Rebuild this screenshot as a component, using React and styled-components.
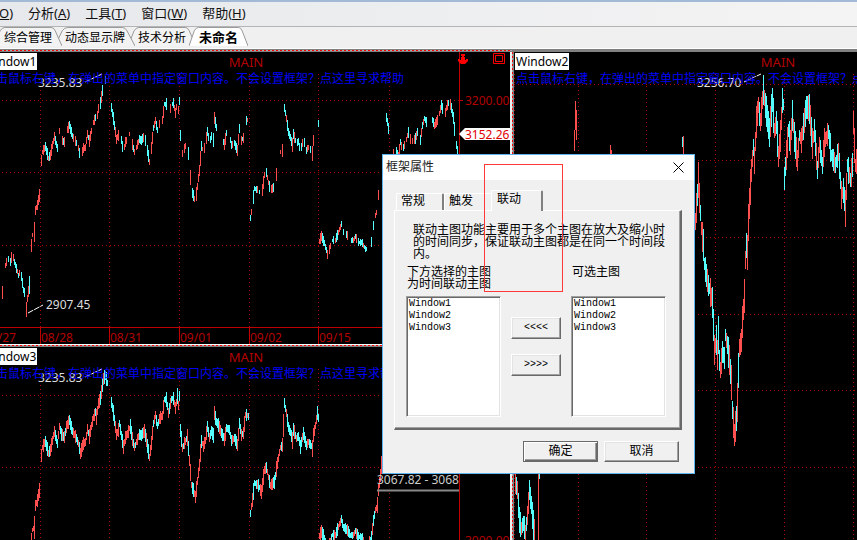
import React, { useState } from 'react';
import styled, { createGlobalStyle, css } from 'styled-components';

const UP = '#ff5050';
const DOWN = '#54ffff';
const GRID = '#b00000';

const GlobalStyle = createGlobalStyle`
    * {
        box-sizing: border-box;
    }
    body {
        margin: 0;
        overflow: hidden;
        background: #000;
        font-family: 'Noto Sans', 'Noto Sans CJK SC', sans-serif;
        font-size: 12px;
    }
    button, select {
        font: inherit;
        color: inherit;
    }
`;

const Page = styled.div`
    position: relative;
    display: flex;
    flex-direction: column;
    height: 100vh;
    overflow: hidden;
`;

const MenuBar = styled.nav`
    display: flex;
    align-items: center;
    gap: 15px;
    flex: none;
    height: 27px;
    padding-bottom: 2px;
    margin-left: -1px;
    border-top: 2px solid #a3bad6;
    border-bottom: 1px solid #b4b4b4;
    background: linear-gradient(90deg, #e6e8eb, #f4f4f4);
    font-size: 13px;
`;

const MenuItem = styled.button`
    padding: 0;
    border: 0;
    background: none;
    color: #111;
    line-height: 20px;
    white-space: nowrap;
`;

const DocTabs = styled.div`
    display: flex;
    align-items: flex-end;
    flex: none;
    height: 22px;
    padding-bottom: 2px;
    margin-left: -6px;
    background: #f0f0f0;
    border-bottom: 1px solid #fff;
`;

const DocTab = styled.button`
    position: relative;
    z-index: ${(props) => props.$order};
    height: 19px;
    padding: 2px 10px 0;
    margin-right: -7px;
    border: 0;
    background: none;
    color: #000;
    font-size: ${(props) => (props.$active ? '13px' : '12px')};
    font-weight: ${(props) => (props.$active ? 700 : 400)};
    line-height: 17px;
    white-space: nowrap;
    svg {
        position: absolute;
        inset: 0;
        width: 100%;
        height: 100%;
        z-index: -1;
    }
`;

const Workspace = styled.main`
    flex: none;
    display: grid;
    grid-template-columns: 1fr 1fr;
    grid-template-rows: 1fr 1fr;
    width: calc(100% + 207px);
    height: calc(100vh + 50px);
    margin-left: -20px;
`;

const dots = (angle) => `repeating-linear-gradient(${angle}, #f00 0 2px, #a8a8a8 2px 4px)`;

const Pane = styled.section`
    display: flex;
    grid-row: span ${(props) => props.$rows};
    min-width: 0;
    min-height: 0;
    padding: 3px 2px 0;
    background:
        ${(props) => props.$marked && css`${dots('90deg')} 0 1px / 100% 1px no-repeat,`}
        ${(props) => !props.$marked && css`${dots('0deg')} 0 3px / 1px 100% no-repeat,`}
        linear-gradient(${(props) => props.$edge}, ${(props) => props.$edge}) 0 0 / 100% 1px no-repeat,
        linear-gradient(#808080, #808080) 0 0 / 100% 3px no-repeat,
        linear-gradient(90deg, #808080 50%, #f0f0f0 50%);
`;

const ChartArea = styled.div`
    position: relative;
    flex: 1;
    overflow: hidden;
    background: #000;
`;

const Chart = styled.svg`
    position: absolute;
    inset: 0;
    width: 100%;
    height: 100%;
    font-size: 12px;
`;

const PaneHead = styled.div`
    position: relative;
    display: grid;
    grid-template-columns: 1fr auto 1fr;
    align-items: start;
    padding: 1px 1px 0;
    color: #b40000;
`;

const PaneName = styled.span`
    justify-self: start;
    padding: 0 1px;
    background: #fff;
    color: #000;
    line-height: 17px;
`;

const PaneTitle = styled.span`
    font-size: 13px;
    line-height: 18px;
`;

const PaneTools = styled.span`
    display: flex;
    justify-content: flex-end;
    gap: 25px;
    padding-right: 4px;
`;

const Hint = styled.a`
    position: relative;
    display: block;
    margin-left: 2px;
    color: #0000f4;
    font-family: 'Noto Sans CJK SC', sans-serif;
    line-height: 14px;
    text-decoration: none;
    white-space: nowrap;
`;

const Dialog = styled.form`
    position: absolute;
    z-index: 10;
    left: 382px;
    top: 154px;
    width: 313px;
    border: 1px solid #5eb4ee;
    background: #f0f0f0;
    color: #000;
    font-family: 'Liberation Mono', 'Noto Sans CJK SC', monospace;
    line-height: 12px;
`;

const TitleBar = styled.header`
    display: flex;
    justify-content: space-between;
    align-items: center;
    height: 25px;
    padding: 0 10px 0 3px;
    background: #fff;
    color: #222;
`;

const CloseButton = styled.button`
    display: flex;
    padding: 0;
    border: 0;
    background: none;
`;

const DialogBody = styled.div`
    padding: 10px 12px 11px 11px;
`;

const TabList = styled.div`
    display: flex;
    align-items: flex-end;
    height: 20px;
    padding-left: 2px;
`;

const PageTab = styled.button`
    position: relative;
    width: 48px;
    height: 17px;
    padding: 0 0 0 4px;
    border: 0;
    border-top: 1px solid #fff;
    border-left: 1px solid #fff;
    border-right: 2px solid #808080;
    border-radius: 2px 2px 0 0;
    background: #f0f0f0;
    line-height: 14px;
    text-align: left;
    &:nth-child(2) {
        border-right-color: #f0f0f0;
    }
    ${(props) =>
        props.$active &&
        css`
            width: 52px;
            height: 21px;
            padding: 0 0 3px 5px;
            margin: 0 0 -1px -1px;
        `}
`;

const TabPage = styled.div`
    height: 220px;
    padding: 14px 14px 0 11px;
    border: 1px solid #fff;
    border-right: 2px solid #696969;
    border-bottom: 2px solid #696969;
    box-shadow: inset -1px -1px #a0a0a0;
`;

const Description = styled.p`
    margin: 0 0 6px 7px;
    white-space: nowrap;
`;

const Picker = styled.div`
    display: grid;
    grid-template-columns: 95px 1fr 95px;
`;

const Field = styled.div`
    display: flex;
    flex-direction: column;
    label {
        height: 29px;
        padding-left: 1px;
        white-space: nowrap;
    }
`;

const ListBox = styled.select`
    width: 95px;
    height: 121px;
    padding: 1px;
    border: 1px solid;
    border-color: #a0a0a0 #fff #fff #a0a0a0;
    border-radius: 0;
    outline: 0;
    background: #fff;
    box-shadow: inset 1px 1px #696969, inset -1px -1px #e3e3e3;
    font-size: 10px;
    overflow: hidden;
    option {
        min-height: 12px;
        padding: 0 1px;
        line-height: 12px;
    }
`;

const Movers = styled.div`
    display: flex;
    flex-direction: column;
    align-items: center;
    gap: 15px;
    padding-top: 50px;
`;

const PushButton = styled.button`
    width: ${(props) => (props.$small ? '50px' : '75px')};
    height: ${(props) => (props.$small ? '22px' : '21px')};
    padding: 0;
    border: 1px solid;
    border-color: #fff #696969 #696969 #fff;
    background: #f0f0f0;
    box-shadow: inset -1px -1px #a0a0a0, inset 1px 1px #e3e3e3;
    font-size: ${(props) => (props.$small ? '10px' : '12px')};
    line-height: 16px;
    ${(props) =>
        props.$primary &&
        css`
            border-color: #696969;
            box-shadow: inset 1px 1px #fff, inset -1px -1px #696969, inset -2px -2px #a0a0a0;
        `}
`;

const Actions = styled.footer`
    display: flex;
    justify-content: flex-end;
    gap: 6px;
    padding: 11px 3px 0 0;
`;

const Highlight = styled.div`
    position: absolute;
    z-index: 11;
    left: 484px;
    top: 164px;
    width: 79px;
    height: 128px;
    border: 1px solid #ff3838;
    pointer-events: none;
`;

// one array per trading day, flat x, y pairs
const indexDays = [
    [0, 275, 2, 292, 5, 265, 7, 258, 10, 262, 12, 253, 14, 262, 18, 275, 20, 270, 23, 290, 25, 294,
        26, 309, 27, 298, 29, 285, 30, 260, 31, 245, 32, 235, 34, 232, 35, 210, 37, 205, 39, 195, 40, 183],
    [41, 160, 42, 152, 43, 150, 45, 146, 48, 158, 50, 155, 52, 145, 54, 136, 57, 148, 59, 131, 61, 139,
        64, 142, 66, 132, 69, 125, 72, 136, 75, 141, 78, 148, 80, 158, 83, 148, 85, 147, 87, 134, 89, 141,
        91, 131, 93, 122, 95, 117, 96, 122, 98, 108, 100, 103, 102, 90, 103, 84, 105, 80, 107, 88, 108, 88],
    [111, 107, 113, 118, 116, 139, 118, 135, 119, 128, 121, 140, 123, 152, 125, 142, 127, 139, 130, 131,
        132, 144, 134, 152, 136, 147, 139, 139, 141, 140, 144, 136, 146, 145, 149, 162, 151, 148, 153, 128,
        155, 120, 157, 130, 159, 124, 162, 120, 164, 104, 166, 104, 168, 118, 171, 104, 173, 103, 175, 113,
        177, 101, 178, 110, 179, 101, 180, 100],
    [180, 135, 182, 153, 184, 148, 187, 142, 189, 165, 191, 190, 193, 195, 195, 202, 197, 186, 199, 170,
        201, 146, 203, 151, 205, 145, 207, 131, 209, 142, 211, 136, 213, 140, 214, 118, 216, 127, 218, 130,
        221, 138, 224, 144, 226, 133, 229, 135, 231, 145, 234, 143, 237, 150, 239, 128, 241, 140, 243, 138,
        245, 120, 247, 120, 249, 123],
    [250, 218, 252, 205, 254, 188, 258, 190, 261, 197, 264, 175, 266, 172, 268, 182, 270, 190, 274, 187,
        277, 168, 280, 152, 282, 150, 283, 130, 284, 108, 286, 118, 288, 132, 290, 137, 292, 145, 293, 134,
        296, 143, 298, 141, 300, 152, 303, 138, 306, 150, 308, 147, 310, 149, 312, 153, 313, 140, 315, 130,
        317, 118, 319, 128],
    [319, 241, 321, 236, 324, 243, 327, 254, 329, 249, 332, 240, 335, 240, 338, 232, 341, 224, 343, 232,
        347, 235, 350, 240, 353, 240, 355, 236, 358, 242, 362, 243, 365, 249, 368, 250, 371, 242, 373, 225,
        375, 215, 377, 210, 378, 195, 380, 180, 381, 170, 382, 160, 383, 150, 384, 125, 385, 113, 387, 122,
        389, 135],
    [391, 149, 393, 152, 395, 150, 398, 156, 400, 142, 402, 150, 405, 143, 408, 132, 411, 142, 415, 138,
        417, 132, 420, 140, 422, 125, 424, 118, 426, 122, 428, 107, 430, 115, 432, 120, 434, 125, 437, 120,
        439, 113, 441, 105, 444, 116, 446, 108, 449, 100, 451, 108, 453, 118, 455, 140, 457, 150, 458, 155],
];

const stockDays = [
    [574, 140, 575, 115, 576, 125, 577, 112],
    [610, 158, 612, 154],
    [682, 142, 684, 150],
    [515, 482, 517, 490, 519, 520, 521, 528, 523, 523, 525, 532, 527, 515, 529, 490, 531, 505, 533, 525, 535, 545],
    [695, 221, 697, 195, 698, 180, 699, 198, 701, 228, 703, 245, 704, 264, 706, 275, 708, 285, 710, 292,
        712, 302, 713, 325, 714, 350, 716, 340, 717, 355, 718, 335, 719, 360, 720, 370, 722, 352, 724, 358,
        725, 335, 727, 345, 729, 360, 731, 382, 732, 410, 734, 435, 736, 418, 737, 402, 738, 370, 739, 348,
        741, 340, 742, 322, 744, 296, 745, 260, 746, 245, 747, 252, 748, 222, 749, 203, 751, 170, 753, 147,
        754, 160, 756, 122, 758, 105, 760, 122, 762, 100, 763, 90, 765, 105, 767, 118, 769, 132, 772, 100,
        774, 130, 776, 122, 778, 156, 780, 136, 782, 100, 784, 108],
    [784, 178, 786, 155, 788, 130, 790, 142, 792, 115, 794, 137, 797, 160, 799, 135, 801, 140, 804, 120,
        806, 107, 809, 109, 812, 143, 814, 130, 817, 170, 819, 145, 822, 165, 824, 142, 828, 132, 831, 155,
        835, 165, 838, 152, 841, 195, 843, 190, 845, 208, 847, 165, 850, 180, 853, 158],
    [853, 122, 854, 145, 855, 165, 857, 158],
];

function buildBars(days, size, keep) {
    const paths = { up: '', down: '' };
    let seed = 17;
    const random = () => {
        seed = (seed * 16807) % 2147483647;
        return seed / 2147483647;
    };
    days.forEach((points) => {
        for (let i = 0; i < points.length - 2; i += 2) {
            const [x0, y0, x1, y1] = points.slice(i, i + 4);
            for (let x = x0; x < x1; x += 1) {
                const y = y0 + ((y1 - y0) * (x - x0)) / (x1 - x0);
                const length = Math.round(size * (0.4 + random()) + Math.abs(y1 - y0) / (x1 - x0) / 2);
                const rising = y1 < y0 ? random() < 0.8 : random() < 0.25;
                if (random() < keep) {
                    paths[rising ? 'up' : 'down'] += `M${x + 0.5} ${Math.round(y - length / 2)}v${length}`;
                }
            }
        }
    });
    return paths;
}

function Bars({ days, size, keep = 1 }) {
    const { up, down } = buildBars(days, size, keep);
    return (
        <g fill='none' shapeRendering='crispEdges'>
            <path d={up} stroke={UP} />
            <path d={down} stroke={DOWN} />
        </g>
    );
}

function Grid({ xs, ys, left, right, top, bottom }) {
    return (
        <g stroke={GRID} strokeDasharray='1 3' shapeRendering='crispEdges'>
            {xs.map((x) => (
                <line key={x} x1={x + 0.5} x2={x + 0.5} y1={top} y2={bottom} />
            ))}
            {ys.map((y) => (
                <line key={y} x1={left} x2={right} y1={y + 0.5} y2={y + 0.5} />
            ))}
        </g>
    );
}

const dates = [
    [-17, '08/27'],
    [40, '08/28'],
    [109, '08/31'],
    [179, '09/01'],
    [249, '09/02'],
    [318, '09/15'],
    [389, '09/16'],
];

function IndexChart({ dense }) {
    return (
        <Chart>
            <g transform='translate(18 -52)'>
                <Grid xs={dates.map(([x]) => x)} ys={[100, 172, 245]} left={-18} right={459} top={74} bottom={327} />
                <Bars days={indexDays} size={dense ? 9 : 7} keep={dense ? 1 : 0.72} />
                <path d='M459.5 52V344M-18 327.5H459M459 100.5h4' stroke='#c00000' />
                {dates.map(([x, text]) => (
                    <g key={text} fill='#b40000'>
                        <path d={`M${x + 0.5} 327v17`} stroke='#c00000' />
                        <text x={x + 1} y='342'>{text}</text>
                    </g>
                ))}
                <g fill='#b40000'>
                    <text x='465' y='105'>3200.00</text>
                    <text x='465' y='250'>3000.00</text>
                </g>
                <g fill='#ddd'>
                    <text x='38' y='87'>3235.83</text>
                    <text x='46' y='309'>2907.45</text>
                </g>
                <path d='M85 82L102 74M28 313L43 305' stroke='#fff' strokeDasharray='6 1' />
                {dense ? (
                    <svg x='377' y='176' width='82' height='21'>
                        <rect x='6' width='76' height='19' fill='#000' />
                        <path d='M0 19.5H82' stroke='#888' strokeWidth='2' />
                        <text x='0' y='13' fill='#ccc'>3067.82 - 3068.45</text>
                    </svg>
                ) : (
                    <g>
                        <path d='M459 134l6-6h45v12h-45z' fill='#fff' />
                        <text x='465' y='139' fill='#e00000'>3152.26</text>
                    </g>
                )}
            </g>
        </Chart>
    );
}

function StockChart() {
    return (
        <Chart>
            <g transform='translate(-514 -52)'>
                <Grid
                    xs={[514, 578, 646, 715, 784, 853]}
                    ys={[84, 160, 237, 314, 390, 467]}
                    left={514}
                    right={1000}
                    top={74}
                    bottom={640}
                />
                <Bars days={stockDays} size={20} />
                <path d='M538.5 474V560' stroke={UP} />
                <path d='M539.5 474v5' stroke={DOWN} />
                <text x='697' y='87' fill='#ddd'>3256.70</text>
                <path d='M744 82L761 74' stroke='#fff' strokeDasharray='6 1' />
            </g>
        </Chart>
    );
}

function ChartPane({ name, marked, edge = '#808080', rows = 1, tools, children }) {
    return (
        <Pane $marked={marked} $edge={edge} $rows={rows}>
            <ChartArea>
                {children}
                <PaneHead>
                    <PaneName>{name}</PaneName>
                    <PaneTitle>MAIN</PaneTitle>
                    {tools && (
                        <PaneTools>
                            <svg width='10' height='12' viewBox='0 0 10 12' fill='#f00'>
                                <path d='M3 1h4v2H6v1h1v3h1V6h2v2L7 11H3L0 8V6h2v1h1V4h1V3H3z' />
                            </svg>
                            <svg width='12' height='11' viewBox='0 0 12 11' fill='none' stroke='#f00'>
                                <path d='M.5 .5h11v10H.5zM2.5 2.5h7v6h-7z' />
                            </svg>
                        </PaneTools>
                    )}
                </PaneHead>
                <Hint href='#help'>点击鼠标右键，在弹出的菜单中指定窗口内容。不会设置框架？点这里寻求帮助</Hint>
            </ChartArea>
        </Pane>
    );
}

const menus = [
    ['', 'O'],
    ['分析', 'A'],
    ['工具', 'T'],
    ['窗口', 'W'],
    ['帮助', 'H'],
];

const documents = ['综合管理', '动态显示牌', '技术分析', '未命名'];
const windows = ['Window1', 'Window2', 'Window3'];

function WindowList({ id, children }) {
    return (
        <Field>
            <label htmlFor={id}>{children}</label>
            <ListBox id={id} multiple>
                {windows.map((name) => (
                    <option key={name}>{name}</option>
                ))}
            </ListBox>
        </Field>
    );
}

function FrameDialog() {
    const [tab, setTab] = useState('联动');
    return (
        <Dialog role='dialog' aria-label='框架属性' onSubmit={(e) => e.preventDefault()}>
            <TitleBar>
                <span>框架属性</span>
                <CloseButton type='button' aria-label='关闭'>
                    <svg width='11' height='11' viewBox='0 0 11 11' stroke='#000'>
                        <path d='M.5 .5l10 10M10.5 .5l-10 10' />
                    </svg>
                </CloseButton>
            </TitleBar>
            <DialogBody>
                <TabList role='tablist'>
                    {['常规', '触发', '联动'].map((name) => (
                        <PageTab
                            key={name}
                            type='button'
                            role='tab'
                            aria-selected={tab === name}
                            $active={tab === name}
                            onClick={() => setTab(name)}
                        >
                            {name}
                        </PageTab>
                    ))}
                </TabList>
                <TabPage>
                    <Description>
                        联动主图功能主要用于多个主图在放大及缩小时
                        <br />
                        的时间同步，保证联动主图都是在同一个时间段
                        <br />
                        内。
                    </Description>
                    <Picker>
                        <WindowList id='linked'>
                            下方选择的主图
                            <br />
                            为时间联动主图
                        </WindowList>
                        <Movers>
                            <PushButton type='button' $small>{'<<<<'}</PushButton>
                            <PushButton type='button' $small>{'>>>>'}</PushButton>
                        </Movers>
                        <WindowList id='available'>可选主图</WindowList>
                    </Picker>
                </TabPage>
                <Actions>
                    <PushButton type='submit' $primary>确定</PushButton>
                    <PushButton type='button'>取消</PushButton>
                </Actions>
            </DialogBody>
        </Dialog>
    );
}

function App() {
    return (
        <Page>
            <GlobalStyle />
            <MenuBar>
                {menus.map(([text, key]) => (
                    <MenuItem key={key} type='button'>
                        {text}
                        {text && '('}
                        <u>{key}</u>)
                    </MenuItem>
                ))}
            </MenuBar>
            <DocTabs>
                {documents.map((name, i) => {
                    const active = name === '未命名';
                    return (
                        <DocTab key={name} type='button' $active={active} $order={active ? 9 : 5 - i}>
                            <svg viewBox='0 0 100 20' preserveAspectRatio='none'>
                                <path
                                    d='M0 20L9 4Q12 .5 16 .5H84Q88 .5 90 4L100 20'
                                    fill={active ? '#fff' : '#f3f3f3'}
                                    stroke='#999'
                                    vectorEffect='non-scaling-stroke'
                                />
                            </svg>
                            {name}
                        </DocTab>
                    );
                })}
            </DocTabs>
            <Workspace>
                <ChartPane name='Window1' marked tools>
                    <IndexChart />
                </ChartPane>
                <ChartPane name='Window2' rows={2}>
                    <StockChart />
                </ChartPane>
                <ChartPane name='Window3' marked edge='#fff'>
                    <IndexChart dense />
                </ChartPane>
            </Workspace>
            <FrameDialog />
            <Highlight />
        </Page>
    );
}

export default App;
